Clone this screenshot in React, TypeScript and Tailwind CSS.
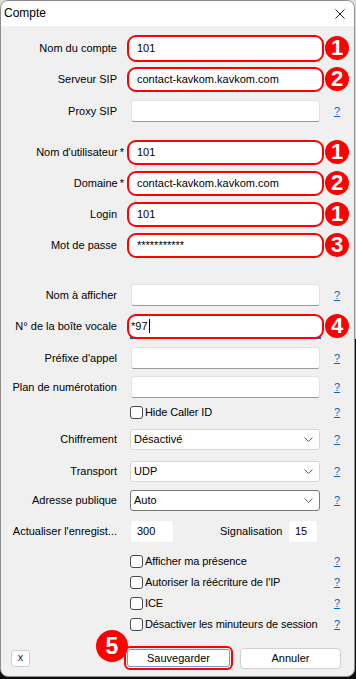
import type { ReactNode } from 'react';

function Label({ text, required }: { text: string; required?: boolean }) {
  return (
    <div className="w-[116px] shrink-0 whitespace-nowrap text-right text-[11px] text-black">
      {text}
      {required && <span className="-mr-[7px] ml-[2px]">*</span>}
    </div>
  );
}

function Help() {
  return <span className="ml-[14px] text-[11px] leading-none text-[#0066cc] underline">?</span>;
}

function Badge({ n }: { n: number }) {
  return (
    <div className="ml-[1px] flex h-[24px] w-[24px] shrink-0 items-center justify-center rounded-full bg-[#ff0000] text-[22px] font-bold leading-none text-white">
      {n}
    </div>
  );
}

function RedField({ value, tall, focused }: { value: string; tall?: boolean; focused?: boolean }) {
  return (
    <div className="relative ml-[10px]">
      {focused && <div className="absolute bottom-[0px] left-[3px] h-[2px] w-[191px] bg-[#0067c0]" />}
      <div
        className={`relative flex w-[197px] items-center rounded-[9px] border-2 border-[#ff0000] bg-white text-[11px] text-black ${
          tall ? 'h-[27px]' : 'h-[25px]'
        } ${focused ? 'pl-[2px]' : 'pl-[8px]'}`}
      >
        {value}
        {focused && <span className="ml-[1px] h-[14px] w-px bg-black" />}
      </div>
    </div>
  );
}

function Box() {
  return <div className="ml-[14px] h-[22px] w-[189px] rounded-[3px] border border-[#e3e3e3] border-b-[#9a9a9a] bg-white" />;
}

function Select({ value, dark }: { value: string; dark?: boolean }) {
  return (
    <div
      className={`ml-[13px] flex h-[21px] w-[190px] items-center justify-between rounded-[3px] border bg-white pl-[3px] pr-[6px] text-[11px] text-black ${
        dark ? 'border-[#7a7a7a]' : 'border-[#d6d6d6]'
      }`}
    >
      <span>{value}</span>
      <svg width="9" height="5" viewBox="0 0 9 5" fill="none">
        <path d="M0.5 0.5L4.5 4.5L8.5 0.5" stroke="#5f5f5f" strokeWidth="1" />
      </svg>
    </div>
  );
}

function Row({ className, children }: { className: string; children: ReactNode }) {
  return <div className={`flex h-[22px] items-center ${className}`}>{children}</div>;
}

function Check({ text, className = '' }: { text: string; className?: string }) {
  return (
    <div className={`flex h-[21px] items-center ${className}`}>
      <div className="w-[116px] shrink-0" />
      <div className="ml-[13px] flex w-[190px] items-center text-[11px] text-black">
        <span className="h-[13px] w-[13px] shrink-0 rounded-[3px] border border-[#4a4a4a] bg-white" />
        <span className="ml-[2px] whitespace-nowrap tracking-[-0.1px]">{text}</span>
      </div>
      <Help />
    </div>
  );
}

export default function App() {
  return (
    <div className="h-[679px] w-[356px] bg-[linear-gradient(to_bottom,#dcdcdc_50%,#0d0d0d_50%)] font-['Liberation_Sans',Arial,sans-serif]">
      <div className="h-[677px] w-[355px] overflow-hidden rounded-[8px] border border-[#8c8c8c] bg-[#f0f0f0]">
        {/* title bar */}
        <div className="flex h-[25px] items-start justify-between bg-white pl-[3px] pr-[9px]">
          <span className="mt-[3px] text-[12px] text-black">Compte</span>
          <svg className="mt-[8px]" width="10" height="10" viewBox="0 0 10 10" fill="none">
            <path d="M0.5 0.5L9.5 9.5M9.5 0.5L0.5 9.5" stroke="#1a1a1a" strokeWidth="1" />
          </svg>
        </div>

        <Row className="mt-[11px]">
          <Label text="Nom du compte" />
          <RedField value="101" tall />
          <Badge n={1} />
        </Row>
        <Row className="mt-[9px]">
          <Label text="Serveur SIP" />
          <RedField value="contact-kavkom.kavkom.com" />
          <Badge n={2} />
        </Row>
        <Row className="mt-[10px]">
          <Label text="Proxy SIP" />
          <Box />
          <Help />
        </Row>

        <Row className="mt-[19px]">
          <Label text="Nom d'utilisateur" required />
          <RedField value="101" />
          <Badge n={1} />
        </Row>
        <Row className="mt-[9px]">
          <Label text="Domaine" required />
          <RedField value="contact-kavkom.kavkom.com" />
          <Badge n={2} />
        </Row>
        <Row className="mt-[9px]">
          <Label text="Login" />
          <RedField value="101" />
          <Badge n={1} />
        </Row>
        <Row className="mt-[9px]">
          <Label text="Mot de passe" />
          <RedField value="***********" />
          <Badge n={3} />
        </Row>

        <Row className="mt-[28px]">
          <Label text="Nom à afficher" />
          <Box />
          <Help />
        </Row>
        <Row className="mt-[9px]">
          <Label text="N° de la boîte vocale" />
          <RedField value="*97" focused />
          <Badge n={4} />
        </Row>
        <Row className="mt-[10px]">
          <Label text="Préfixe d'appel" />
          <Box />
          <Help />
        </Row>
        <Row className="mt-[7px]">
          <Label text="Plan de numérotation" />
          <Box />
          <Help />
        </Row>

        <Check text="Hide Caller ID" className="mt-[4px]" />

        <Row className="mt-[5px]">
          <Label text="Chiffrement" />
          <Select value="Désactivé" />
          <Help />
        </Row>
        <Row className="mt-[10px]">
          <Label text="Transport" />
          <Select value="UDP" />
          <Help />
        </Row>
        <Row className="mt-[7px]">
          <Label text="Adresse publique" />
          <Select value="Auto" dark />
          <Help />
        </Row>

        <Row className="mt-[9px]">
          <Label text="Actualiser l'enregist..." />
          <div className="ml-[14px] flex h-[21px] w-[42px] items-center rounded-[2px] bg-white pl-[6px] text-[11px] text-black">300</div>
          <span className="ml-[47px] w-[62px] text-[11px] text-black">Signalisation</span>
          <div className="ml-[7px] flex h-[21px] w-[28px] items-center rounded-[2px] bg-white pl-[6px] text-[11px] text-black">15</div>
        </Row>

        <Check text="Afficher ma présence" className="mt-[9px]" />
        <Check text="Autoriser la réécriture de l'IP" />
        <Check text="ICE" />
        <Check text="Désactiver les minuteurs de session" />

        {/* buttons */}
        <div className="relative mt-[11px] flex h-[24px] items-center">
          <button className="ml-[10px] flex h-[17px] w-[19px] items-center justify-center rounded-[3px] border border-[#cfcfcf] bg-white pb-[2px] text-[11px] text-[#1a1a4a]">
            x
          </button>
          <div className="ml-[94px] h-[24px] w-[109px] rounded-[6px] border-2 border-[#ff0000] p-[1px]">
            <button className="flex h-full w-full items-center justify-center rounded-[3px] border border-[#6a9bd6] bg-white text-[11px] text-black">
              Sauvegarder
            </button>
          </div>
          <button className="ml-[7px] flex h-[21px] w-[101px] items-center justify-center rounded-[4px] border border-[#d0d0d0] bg-white text-[11px] text-black">
            Annuler
          </button>
          <div className="absolute left-[95px] top-[-16px] flex h-[32px] w-[32px] items-center justify-center rounded-full bg-[#ff0000] text-[23px] font-bold leading-none text-white">
            5
          </div>
        </div>
      </div>
    </div>
  );
}
